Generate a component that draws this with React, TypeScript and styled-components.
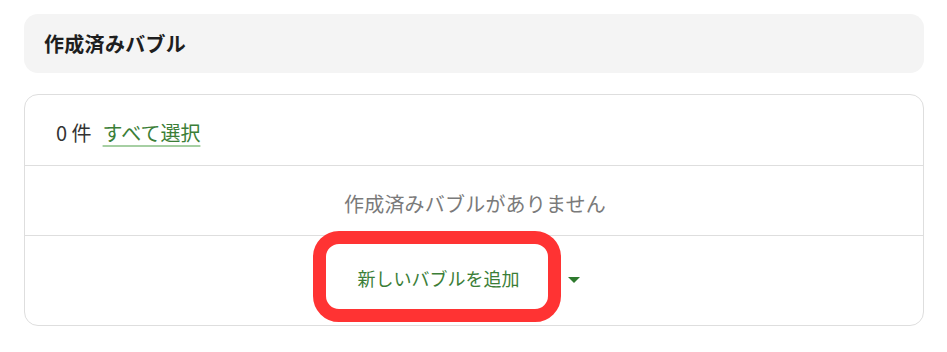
import React from "react";
import styled, { createGlobalStyle } from "styled-components";

const Global = createGlobalStyle`
  html, body { margin: 0; padding: 0; background: #ffffff; }
  body { font-family: "Noto Sans CJK JP", "Noto Sans", sans-serif; }
  * { box-sizing: border-box; }
`;

const Page = styled.div`
  padding: 14px 23px 0 24px;
  display: flex;
  flex-direction: column;
  gap: 21px;
`;

const Header = styled.div`
  height: 59px;
  background: #f4f4f4;
  border-radius: 14px;
  display: flex;
  align-items: center;
  padding-left: 20px;
`;

const Title = styled.h2`
  margin: 0;
  font-size: 20px;
  font-weight: 700;
  letter-spacing: 0.3px;
  color: #1e1e1e;
  line-height: 1;
`;

const Card = styled.div`
  border: 1px solid #dedede;
  border-radius: 14px;
  display: flex;
  flex-direction: column;
`;

const Row = styled.div<{ $h: number; $divider?: boolean }>`
  height: ${(p) => p.$h}px;
  border-bottom: ${(p) => (p.$divider ? "1px solid #dedede" : "none")};
  display: flex;
  align-items: center;
`;

const Toolbar = styled(Row)`
  padding: 6px 0 0 31px;
  font-size: 20px;
  color: #333;
`;

const Count = styled.span`
  line-height: 1;
`;

const SelectAll = styled.a`
  margin-left: 11px;
  color: #3b7e37;
  text-decoration: underline;
  text-decoration-color: #a6cfa3;
  text-decoration-thickness: 2px;
  text-underline-offset: 4px;
  cursor: pointer;
  line-height: 1;
`;

const Empty = styled(Row)`
  justify-content: center;
  padding-top: 6px;
  padding-left: 2px;
  font-size: 20px;
  letter-spacing: 0.2px;
  color: #7a7a7a;
`;

const Actions = styled.div`
  height: 89px;
  display: flex;
  justify-content: center;
  align-items: flex-start;
  padding: 8px 22px 0 0;
`;

const AddButton = styled.button`
  position: relative;
  width: 222px;
  height: 65px;
  border: none;
  background: #fff;
  color: #3b7e37;
  font-family: inherit;
  font-size: 18px;
  padding: 3px 0 0 3px;
  cursor: pointer;
`;

const Highlight = styled.span`
  position: absolute;
  inset: -13px;
  border: 13px solid #ff3333;
  border-radius: 26px;
  pointer-events: none;
`;

const CaretButton = styled.button`
  width: 52px;
  height: 65px;
  border: none;
  background: transparent;
  display: flex;
  align-items: center;
  justify-content: center;
  padding: 6px 0 0 0;
  cursor: pointer;
`;

const Caret = styled.span`
  width: 0;
  height: 0;
  border-left: 6px solid transparent;
  border-right: 6px solid transparent;
  border-top: 6px solid #2e7a2e;
`;

export default function App() {
  return (
    <>
      <Global />
      <Page>
        <Header>
          <Title>作成済みバブル</Title>
        </Header>
        <Card>
          <Toolbar $h={71} $divider>
            <Count>0 件</Count>
            <SelectAll>すべて選択</SelectAll>
          </Toolbar>
          <Empty $h={70} $divider>
            作成済みバブルがありません
          </Empty>
          <Actions>
            <AddButton>
              新しいバブルを追加
              <Highlight />
            </AddButton>
            <CaretButton aria-label="その他">
              <Caret />
            </CaretButton>
          </Actions>
        </Card>
      </Page>
    </>
  );
}
